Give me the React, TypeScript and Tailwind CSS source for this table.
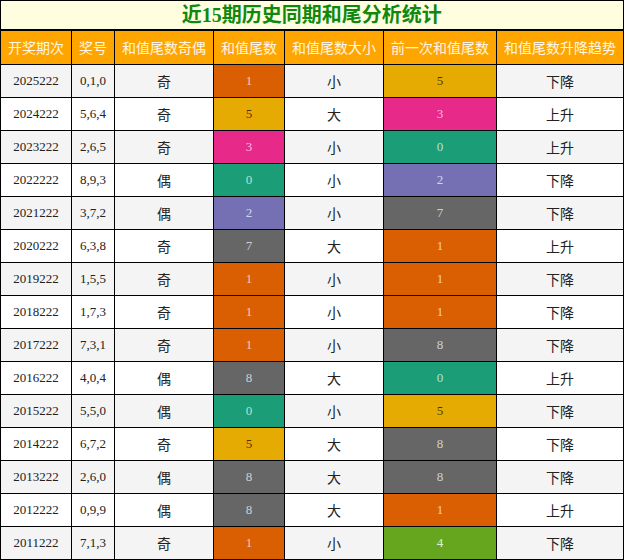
const COLORS: Record<string, string> = {
  "0": "bg-[#1b9e77] text-white/70",
  "1": "bg-[#d95f02] text-white/70",
  "2": "bg-[#7570b3] text-white/70",
  "3": "bg-[#e7298a] text-white/70",
  "4": "bg-[#66a61e] text-white/80",
  "5": "bg-[#e6ab02] text-black/70",
  "7": "bg-[#666666] text-white/70",
  "8": "bg-[#666666] text-white/70",
};

const ROWS: [string, string, string, string, string, string, string][] = [
  ["2025222", "0,1,0", "奇", "1", "小", "5", "下降"],
  ["2024222", "5,6,4", "奇", "5", "大", "3", "上升"],
  ["2023222", "2,6,5", "奇", "3", "小", "0", "上升"],
  ["2022222", "8,9,3", "偶", "0", "小", "2", "下降"],
  ["2021222", "3,7,2", "偶", "2", "小", "7", "下降"],
  ["2020222", "6,3,8", "奇", "7", "大", "1", "上升"],
  ["2019222", "1,5,5", "奇", "1", "小", "1", "下降"],
  ["2018222", "1,7,3", "奇", "1", "小", "1", "下降"],
  ["2017222", "7,3,1", "奇", "1", "小", "8", "下降"],
  ["2016222", "4,0,4", "偶", "8", "大", "0", "上升"],
  ["2015222", "5,5,0", "偶", "0", "小", "5", "下降"],
  ["2014222", "6,7,2", "奇", "5", "大", "8", "下降"],
  ["2013222", "2,6,0", "偶", "8", "大", "8", "下降"],
  ["2012222", "0,9,9", "偶", "8", "大", "1", "上升"],
  ["2011222", "7,1,3", "奇", "1", "小", "4", "下降"],
];

const HEADERS = ["开奖期次", "奖号", "和值尾数奇偶", "和值尾数", "和值尾数大小", "前一次和值尾数", "和值尾数升降趋势"];

const cjk = { fontFamily: '"Noto Sans CJK SC", sans-serif' };

export default function App() {
  return (
    <div className="w-[624px] h-[560px] bg-white overflow-hidden">
      <table
        className="w-[623px] table-fixed border-collapse text-center"
        style={{ fontFamily: '"Liberation Serif", "Noto Sans CJK SC", serif' }}
      >
        <colgroup>
          <col className="w-[71px]" />
          <col className="w-[43px]" />
          <col className="w-[99px]" />
          <col className="w-[71px]" />
          <col className="w-[99px]" />
          <col className="w-[113px]" />
          <col className="w-[127px]" />
        </colgroup>
        <thead>
          <tr className="h-[29px]">
            <th colSpan={7} className="border border-black border-b-2 border-r-2 bg-[#ffffe0] text-[#108810] text-[20px] font-bold leading-none">
              近15期历史同期和尾分析统计
            </th>
          </tr>
          <tr className="h-[35px] bg-[#ffa500]">
            {HEADERS.map((h) => (
              <th key={h} className="border border-black text-white/90 text-[14px] font-normal whitespace-nowrap px-0" style={cjk}>
                {h}
              </th>
            ))}
          </tr>
        </thead>
        <tbody>
          {ROWS.map((r, i) => (
            <tr key={r[0]} className={`h-[33px] ${i % 2 === 0 ? "bg-[#f4f4f4]" : "bg-white"} text-[#222]`}>
              <td className="border border-black text-[13px]">{r[0]}</td>
              <td className="border border-black text-[13px]">{r[1]}</td>
              <td className="border border-black text-[14px]" style={cjk}>{r[2]}</td>
              <td className={`border border-black text-[13px] ${COLORS[r[3]]}`}>{r[3]}</td>
              <td className="border border-black text-[14px]" style={cjk}>{r[4]}</td>
              <td className={`border border-black text-[13px] ${COLORS[r[5]]}`}>{r[5]}</td>
              <td className="border border-black text-[14px]" style={cjk}>{r[6]}</td>
            </tr>
          ))}
        </tbody>
      </table>
    </div>
  );
}
